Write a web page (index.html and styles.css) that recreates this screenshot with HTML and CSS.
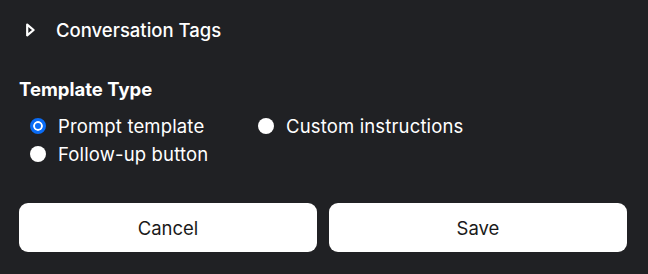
FILE: index.html
```html
<!DOCTYPE html>
<html>
<head>
<meta charset="utf-8">
<link rel="stylesheet" href="styles.css">
</head>
<body>
<div class="panel">
  <div class="disclosure">
    <svg class="tri" width="10" height="14" viewBox="0 0 10 14"><path d="M2.2 1.6 L8.6 7 L2.2 12.4 Z" fill="none" stroke="#fff" stroke-width="2.2" stroke-linejoin="round"/></svg>
    <span class="disc-label">Conversation Tags</span>
  </div>
  <div class="section-title">Template Type</div>
  <div class="radios">
    <label class="radio"><span class="dot checked"></span><span>Prompt template</span></label>
    <label class="radio"><span class="dot"></span><span>Custom instructions</span></label>
    <label class="radio"><span class="dot"></span><span>Follow-up button</span></label>
  </div>
  <div class="actions">
    <button class="btn">Cancel</button>
    <button class="btn">Save</button>
  </div>
</div>
</body>
</html>
```
FILE: styles.css
```css
html, body {
  margin: 0;
  padding: 0;
  background: #202124;
  width: 648px;
  height: 274px;
  overflow: hidden;
  font-family: Inter, "Liberation Sans", sans-serif;
  color: #fff;
}
.panel {
  padding: 0 21px 0 19px;
}
.disclosure {
  display: flex;
  align-items: center;
  height: 60px;
  padding-left: 6px;
  gap: 21px;
}
.tri { display: block; }
.disc-label {
  font-size: 18.5px;
  font-weight: 500;
}
.section-title {
  margin-top: 16px;
  font-size: 18.5px;
  font-weight: 700;
  height: 26px;
  line-height: 26px;
}
.radios {
  margin-top: 10px;
  display: grid;
  grid-template-columns: 228px auto;
  padding-left: 11px;
  row-gap: 0;
}
.radio {
  display: flex;
  align-items: center;
  gap: 12px;
  height: 28px;
  font-size: 18.5px;
  font-weight: 400;
  letter-spacing: 0.15px;
}
.dot {
  width: 16px;
  height: 16px;
  border-radius: 50%;
  background: #fff;
  box-sizing: border-box;
  flex: none;
}
.dot.checked {
  background: #0a6cf5;
  border: 3px solid #0a6cf5;
  box-shadow: inset 0 0 0 2px #fff;
}
.actions {
  margin-top: 35px;
  display: flex;
  gap: 12px;
}
.btn {
  flex: 1;
  height: 49px;
  background: #fff;
  border: none;
  border-radius: 9px;
  font-family: Inter, "Liberation Sans", sans-serif;
  font-size: 18.5px;
  color: #1a1a1a;
}
```
